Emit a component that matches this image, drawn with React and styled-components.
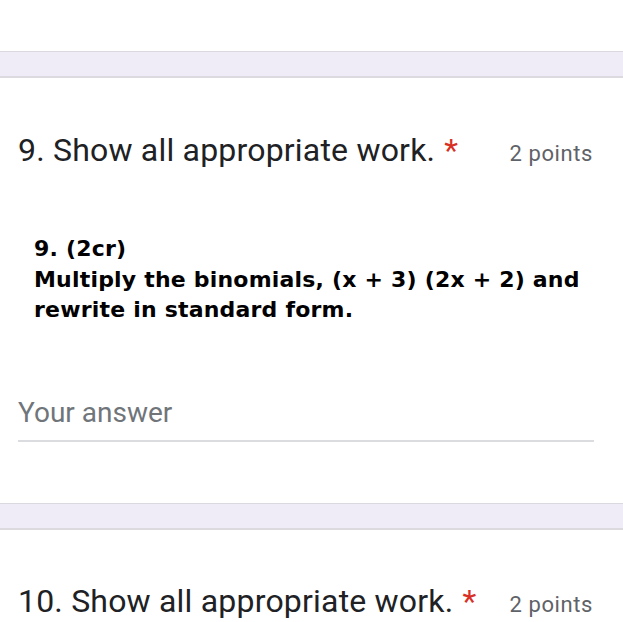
import styled, { createGlobalStyle } from "styled-components";

const GlobalStyle = createGlobalStyle`
  html, body {
    margin: 0;
    padding: 0;
    background: #ffffff;
  }
  body {
    font-family: Roboto, "Liberation Sans", sans-serif;
    overflow: hidden;
  }
`;

const Page = styled.div`
  width: 623px;
  height: 622px;
  overflow: hidden;
  background: #ffffff;
  padding-top: 51px;
  box-sizing: border-box;
`;

const Divider = styled.div`
  height: 24px;
  background: #efebf7;
  border-top: 1px solid #dcd8df;
  border-bottom: 2px solid #dcdade;
`;

const Card = styled.section`
  padding: ${(p) => p.$pad || "0"};
  height: ${(p) => (p.$h ? p.$h + "px" : "auto")};
  box-sizing: border-box;
`;

const TitleRow = styled.div`
  display: flex;
  align-items: baseline;
  padding: 0 30px 0 18px;
`;

const Title = styled.h2`
  flex: 1;
  margin: 0;
  font-weight: 400;
  font-size: 32px;
  line-height: 40px;
  color: #202124;
  letter-spacing: 0.2px;
`;

const Required = styled.span`
  color: #d93025;
  margin-left: 9px;
`;

const Points = styled.span`
  font-size: 22px;
  letter-spacing: 0.6px;
  color: #5f6368;
`;

const Description = styled.div`
  padding: 0 0 0 34px;
  margin-top: 64px;
  font-family: "DejaVu Sans", Verdana, sans-serif;
  font-weight: 700;
  font-size: 22px;
  letter-spacing: 0.2px;
  line-height: 30.5px;
  color: #000000;
`;

const Answer = styled.div`
  margin: 70px 29px 0 18px;
  padding-bottom: 10px;
  border-bottom: 2px solid #dadce0;
  font-size: 28px;
  line-height: 34px;
  color: #70757a;
`;

export default function App() {
  return (
    <Page>
      <GlobalStyle />
      <Divider />
      <Card $h={425} $pad="52px 0 0 0">
        <TitleRow>
          <Title>
            9. Show all appropriate work.<Required>*</Required>
          </Title>
          <Points>2 points</Points>
        </TitleRow>
        <Description>
          9. (2cr)
          <br />
          Multiply the binomials, (x + 3) (2x + 2) and
          <br />
          rewrite in standard form.
        </Description>
        <Answer>Your answer</Answer>
      </Card>
      <Divider />
      <Card $pad="51px 0 0 0">
        <TitleRow>
          <Title>
            10. Show all appropriate work.<Required>*</Required>
          </Title>
          <Points>2 points</Points>
        </TitleRow>
      </Card>
    </Page>
  );
}
